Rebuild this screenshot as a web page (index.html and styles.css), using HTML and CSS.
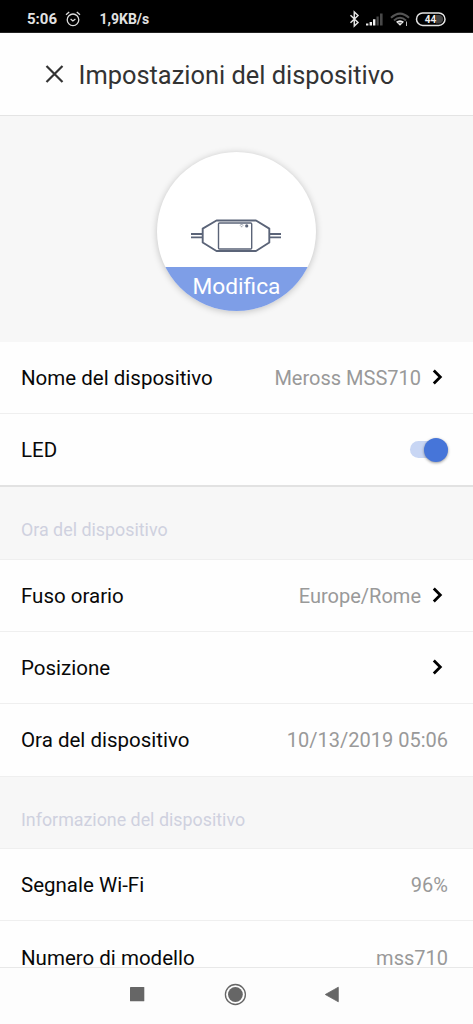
FILE: index.html
```html
<!DOCTYPE html>
<html lang="it">
<head>
<meta charset="utf-8">
<title>Impostazioni del dispositivo</title>
<link rel="stylesheet" href="styles.css">
</head>
<body>
<div class="screen">
  <div class="status">
    <span class="clock">5:06</span>
    <svg class="alarm" width="16" height="16" viewBox="0 0 16 16" fill="none" stroke="#ddd" stroke-width="1.3"><circle cx="8" cy="8.8" r="5.8"/><path d="M1 3.8 4.2 1M15 3.8 11.800 1"/><path d="M5.600 8 7.900 9.900 10.400 8"/></svg>
    <span class="speed">1,9KB/s</span>
    <svg class="signals" width="97" height="18" viewBox="0 0 97 18" fill="none">
      <path d="M1.500 5.200 9 12.500 5.300 16V2L9 5.500 1.500 12.800" stroke="#e4e4e4" stroke-width="1.500"/>
      <path d="M17 13.500h2.400v2H17zM20.600 12h2.400v3.500h-2.400zM24 9.300h2.400v6.200H24z" fill="#eee"/>
      <path d="M27.500 6.500h2.200v9h-2.200zM31 3.500h2.600v12H31z" fill="#484848"/>
      <path d="M42 7.800Q51 -.6 60 7.800M45 10.400Q51 5 57 10.400" stroke="#555" stroke-width="2"/>
      <path d="M47 11.700Q51 8.600 55 11.700L51 15.800z" fill="#eee"/>
      <path d="M49.400 12.800h3.200" stroke="#333"/>
      <path d="M57.500 11.500v4.500" stroke="#bbb"/>
      <rect x="67.500" y="3" width="28.500" height="12.400" rx="6.200" stroke="#e4e4e4" stroke-width="1.500"/>
      <path d="M87 5h3a4.200 4.200 0 0 1 0 8.400h-3z" fill="#444"/>
      <text class="battery" x="81.500" y="13" text-anchor="middle" fill="#eee">44</text>
    </svg>
  </div>
  <header class="header">
    <svg width="19" height="18" viewBox="0 0 19 18" fill="none" stroke="#333" stroke-width="2.2"><path d="M1.500 1 17.500 17M17.500 1 1.500 17"/></svg>
    <h1 class="title">Impostazioni del dispositivo</h1>
  </header>
  <div class="hero">
    <div class="avatar">
      <svg class="device" width="92" height="36" viewBox="0 0 92 36" fill="none" stroke="#5b6478">
        <path stroke-width="1.900" stroke-linejoin="round" d="M12.700 10.600 26.500 2.500H66L79.300 10.600V24.500L66 33H26.500L12.700 24.500z"/>
        <rect x="28.500" y="5" width="33.200" height="26" rx="1" stroke-width="1.400"/>
        <path stroke-width="1.900" d="M1 16H12M1 19.400H12M80 16H91M80 19.400H91"/>
        <circle cx="56.700" cy="7.900" r="1.600" fill="#5b6478" stroke="none"/>
        <path d="M49.800 7.300Q51.600 5.700 53.400 7.300M50.800 8.700h1.600" stroke-width=".9" opacity=".7"/>
      </svg>
      <div class="edit">Modifica</div>
    </div>
  </div>
  <main class="list">
    <div class="row"><span class="name">Nome del dispositivo</span><span class="value">Meross MSS710</span><svg class="chev" width="11" height="16" viewBox="0 0 11 16"><path d="M1.800 1.500 8.300 8 1.800 14.500"/></svg></div>
    <div class="row last"><span class="name">LED</span><span class="toggle"><span class="knob"></span></span></div>
    <h2 class="section">Ora del dispositivo</h2>
    <div class="row"><span class="name">Fuso orario</span><span class="value">Europe/Rome</span><svg class="chev" width="11" height="16" viewBox="0 0 11 16"><path d="M1.800 1.500 8.300 8 1.800 14.500"/></svg></div>
    <div class="row"><span class="name">Posizione</span><svg class="chev" width="11" height="16" viewBox="0 0 11 16"><path d="M1.800 1.500 8.300 8 1.800 14.500"/></svg></div>
    <div class="row tall"><span class="name">Ora del dispositivo</span><span class="value">10/13/2019 05:06</span></div>
    <h2 class="section info">Informazione del dispositivo</h2>
    <div class="row"><span class="name">Segnale Wi-Fi</span><span class="value">96%</span></div>
    <div class="row final"><span class="name">Numero di modello</span><span class="value">mss710</span></div>
  </main>
  <nav class="nav">
    <svg width="473" height="56" viewBox="0 0 473 56" fill="#666"><rect x="130" y="19" width="14.300" height="14.300" rx=".6"/><circle cx="235.400" cy="26.500" r="7.400"/><circle cx="235.400" cy="26.500" r="10" fill="none" stroke="#666" stroke-width="1.300"/><path d="M325.300 26.500 338.300 19.200V33.800z" stroke="#666" stroke-width=".8" stroke-linejoin="round"/></svg>
  </nav>
</div>
</body>
</html>
```
FILE: styles.css
```css
* { box-sizing: border-box; }
body { margin: 0; font-family: Roboto, "Noto Sans", sans-serif; }
.screen { width: 473px; height: 1024px; display: flex; flex-direction: column; overflow: hidden; background: #fefefe; }
.status { flex: none; height: 33px; background: #000; color: #e2e2e2; display: flex; align-items: center; padding: 6px 27px 0; border-bottom: 1px solid #222; font-size: 14px; font-weight: 700; }
.clock { width: 38px; font-size: 15px; }
.alarm { margin-right: 18.500px; }
.signals { margin-left: auto; }
.battery { font-size: 10px; font-weight: 700; }
.header { flex: none; height: 83px; display: flex; align-items: center; padding-left: 45px; border-bottom: 1px solid #e4e4e4; }
.title { margin: 1px 0 0 14.500px; font-size: 25.400px; font-weight: 400; color: #333; white-space: nowrap; }
.hero { flex: none; height: 226px; background: #f7f7f7; padding: 36px 0 0 157px; }
.avatar { width: 159px; height: 159px; border-radius: 50%; background: #fff; overflow: hidden; display: flex; flex-direction: column; box-shadow: 0 1px 7px rgba(0,0,0,.22); }
.device { flex: none; margin: 66px 0 13px 33px; }
.edit { flex: 1; background: #7e9ee7; color: #fff; font-size: 22.700px; line-height: 40px; text-align: center; }
.list { flex: 1; min-height: 0; overflow: hidden; }
.row { height: 72px; display: flex; align-items: center; padding: 0 25px 0 21px; border-bottom: 1px solid #efefef; font-size: 20.500px; line-height: 24px; white-space: nowrap; }
.row.last { height: 73px; border-bottom: 2px solid #e2e2e2; }
.row.tall { height: 73px; }
.row.final { height: 46px; padding-top: 25px; border-bottom: 0; align-items: flex-start; }
.name { color: #080808; margin-right: auto; }
.value { color: #999; font-size: 20px; }
.chev { margin: -1px 5px 0 11px; fill: none; stroke: #000; stroke-width: 2.800; }
.toggle { width: 38px; height: 17px; border-radius: 9px; background: #c8d6f4; display: flex; justify-content: flex-end; align-items: center; }
.knob { width: 24px; height: 24px; flex: none; border-radius: 50%; background: #4675d9; box-shadow: 0 1px 3px rgba(0,0,0,.4); }
.section { margin: 0; height: 73px; padding: 14px 0 0 21px; background: #f7f7f7; border-bottom: 1px solid #efefef; color: #cfd1df; font-size: 17.850px; font-weight: 400; line-height: 58px; }
.section.info { height: 72px; }
.nav { flex: none; height: 57px; background: #fdfdfd; border-top: 1px solid #e8e8e8; }
.nav svg { display: block; }
```
